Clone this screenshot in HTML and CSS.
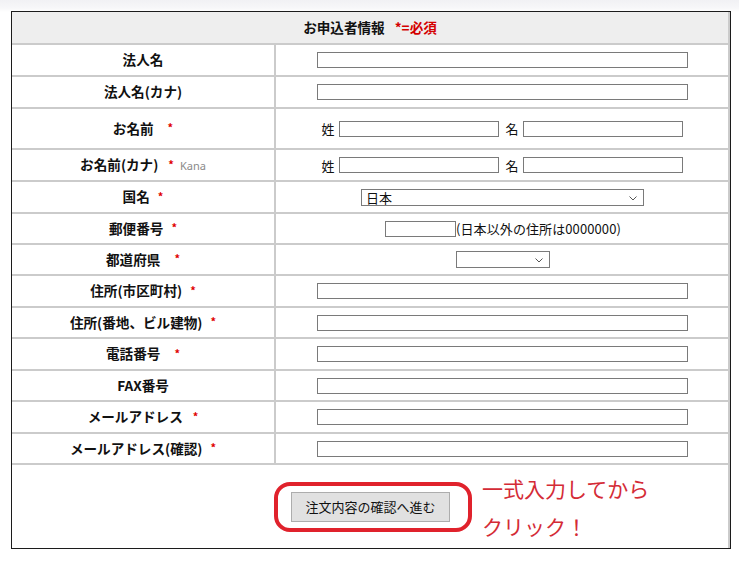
FILE: index.html
```html
<!DOCTYPE html>
<html lang="ja">
<head>
<meta charset="utf-8">
<title>お申込者情報</title>
<link rel="stylesheet" href="styles.css">
</head>
<body>
<div class="page">
  <div class="form">
    <div class="head"><span>お申込者情報</span><span class="head-req">*=必須</span></div>

    <div class="lbl">法人名</div>
    <div class="fld"><input class="txt w-long" type="text"></div>

    <div class="lbl">法人名(カナ)</div>
    <div class="fld"><input class="txt w-long" type="text"></div>

    <div class="lbl">お名前<span class="req wide">*</span></div>
    <div class="fld"><span class="sub">姓</span><input class="txt w-half" type="text"><span class="sub sub-mid">名</span><input class="txt w-half" type="text"></div>

    <div class="lbl">お名前(カナ)<span class="req mid">*</span><span class="kana">Kana</span></div>
    <div class="fld"><span class="sub">姓</span><input class="txt w-half" type="text"><span class="sub sub-mid">名</span><input class="txt w-half" type="text"></div>

    <div class="lbl">国名<span class="req">*</span></div>
    <div class="fld"><span class="sel w-country"><select class="select"><option>日本</option></select><svg class="chev" width="8" height="5" viewBox="0 0 8 5"><path d="M0.5 0.5 L4 4 L7.5 0.5" fill="none" stroke="#555" stroke-width="1"/></svg></span></div>

    <div class="lbl">郵便番号<span class="req">*</span></div>
    <div class="fld"><input class="txt w-zip" type="text"><span class="zip-note">(日本以外の住所は0000000)</span></div>

    <div class="lbl">都道府県<span class="req wide">*</span></div>
    <div class="fld"><span class="sel w-pref"><select class="select"><option></option></select><svg class="chev" width="8" height="5" viewBox="0 0 8 5"><path d="M0.5 0.5 L4 4 L7.5 0.5" fill="none" stroke="#555" stroke-width="1"/></svg></span></div>

    <div class="lbl">住所(市区町村)<span class="req">*</span></div>
    <div class="fld"><input class="txt w-long" type="text"></div>

    <div class="lbl">住所(番地、ビル建物)<span class="req">*</span></div>
    <div class="fld"><input class="txt w-long" type="text"></div>

    <div class="lbl">電話番号<span class="req wide">*</span></div>
    <div class="fld"><input class="txt w-long" type="text"></div>

    <div class="lbl">FAX番号</div>
    <div class="fld"><input class="txt w-long" type="text"></div>

    <div class="lbl">メールアドレス<span class="req mid">*</span></div>
    <div class="fld"><input class="txt w-long" type="text"></div>

    <div class="lbl">メールアドレス(確認)<span class="req">*</span></div>
    <div class="fld"><input class="txt w-long" type="text"></div>

    <div class="submit-row">
      <div class="btn-wrap">
        <button class="btn" type="button">注文内容の確認へ進む</button>
        <span class="ring"></span>
        <div class="note">一式入力してから<br>クリック！</div>
      </div>
    </div>
  </div>
</div>
</body>
</html>
```

FILE: styles.css
```css
* { box-sizing: border-box; }

html, body {
  margin: 0;
  padding: 0;
  background: #fff;
}

body {
  font-family: "Noto Sans CJK JP", "Noto Sans", sans-serif;
  color: #111;
}

.page {
  padding: 11px 0 0 11px;
  min-height: 561px;
  background: linear-gradient(to bottom, #f1f1f4 0, #f7f7f9 8px, #ffffff 12px) no-repeat;
  background-size: 100% 12px;
}

.form {
  width: 720px;
  height: 538px;
  border: 1px solid #1c1c1c;
  background: #cbcbcb;
  padding-right: 2px;
  display: grid;
  grid-template-columns: 262px 452px;
  grid-template-rows: 31px 30px 30px 39px 30px 30px 29px 29px 30px 29px 30px 29px 30px 29px 83px;
  gap: 2px;
}

.head {
  grid-column: 1 / -1;
  background: #eeeeee;
  display: flex;
  align-items: center;
  justify-content: center;
  font-size: 13.6px;
  font-weight: 700;
  line-height: 1;
}

.head-req {
  color: #d40000;
  margin-left: 10px;
}

.lbl {
  background: #fff;
  display: flex;
  align-items: center;
  justify-content: center;
  font-size: 13.6px;
  font-weight: 700;
  line-height: 1;
  white-space: nowrap;
}

.req {
  color: #e00000;
  font-size: 11px;
  font-weight: 700;
  margin-left: 8px;
  position: relative;
  top: -1px;
}

.req.mid { margin-left: 10px; }
.req.wide { margin-left: 14px; }

.kana {
  color: #8a8a8a;
  font-family: "Noto Sans", sans-serif;
  font-size: 11px;
  font-weight: 400;
  margin-left: 6px;
}

.fld {
  background: #fff;
  display: flex;
  align-items: center;
  justify-content: center;
  font-size: 13px;
  line-height: 1;
}

.txt {
  height: 16px;
  border: 1px solid #7a7a7a;
  background: #fff;
  padding: 0 2px;
  margin: 0;
  font-size: 12px;
}

.w-long { width: 371px; margin-left: 1px; }
.w-half { width: 160px; }
.w-zip { width: 71px; margin-left: 2px; }

.sub {
  margin-right: 4px;
  font-size: 13px;
}

.sub-mid { margin-left: 7px; }

.sel {
  position: relative;
  display: inline-flex;
}

.select {
  appearance: none;
  -webkit-appearance: none;
  height: 17px;
  border: 1px solid #7a7a7a;
  border-radius: 0;
  background: #fff;
  padding: 0 0 0 4px;
  margin: 0;
  font-family: "Noto Sans CJK JP", sans-serif;
  font-size: 13px;
  line-height: 15px;
  color: #111;
  width: 100%;
}

.w-country { width: 283px; margin-left: 1px; }
.w-pref { width: 94px; margin-left: 2px; }

.chev {
  position: absolute;
  right: 7px;
  top: 7px;
  pointer-events: none;
}

.zip-note {
  font-size: 13px;
  letter-spacing: 0.1px;
}

.submit-row {
  grid-column: 1 / -1;
  background: #fff;
  display: flex;
  align-items: center;
  justify-content: center;
}

.btn-wrap {
  position: relative;
  display: inline-flex;
  margin-left: 1px;
}

.btn {
  width: 159px;
  height: 30px;
  background: #e1e1e1;
  border: 1px solid #adadad;
  border-radius: 0;
  font-family: "Noto Sans CJK JP", sans-serif;
  font-size: 13px;
  color: #111;
  padding: 0;
  margin: 0;
}

.ring {
  position: absolute;
  left: -17px;
  top: -10px;
  right: -22px;
  bottom: -10px;
  border: 4px solid #e0222c;
  border-radius: 16px;
  pointer-events: none;
}

.note {
  position: absolute;
  left: calc(100% + 32px);
  top: -23px;
  white-space: nowrap;
  color: #d42b36;
  font-size: 21px;
  line-height: 38px;
  font-weight: 400;
}
```
